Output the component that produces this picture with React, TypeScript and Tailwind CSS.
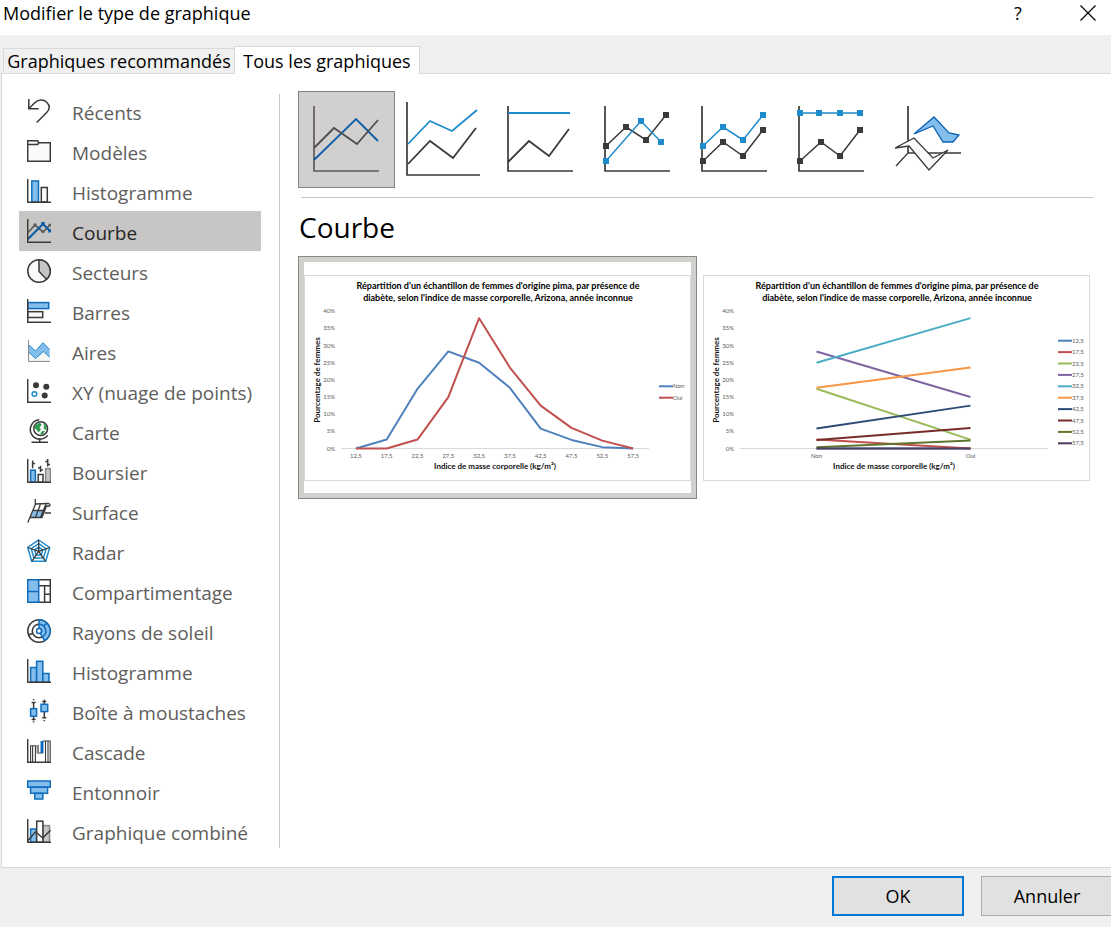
import { useState, type ReactNode } from "react";

const DARK = "#3b3a39";
const BLUE = "#0f6cbd";
const SKY = "#83beec";
const LINE = "#1e8bcd";
const MUTED = "#c8c6c4";

function Glyph({ children, axis = false }: { children: ReactNode; axis?: boolean }) {
  return (
    <svg viewBox="0 0 24 24" className="size-6 shrink-0" fill="none" stroke={DARK} strokeWidth={1.5} aria-hidden="true">
      {children}
      {axis && <path d="M.7 0V23.3H24" />}
    </svg>
  );
}

const pentagon = (s: number) =>
  [[0, -11.3], [11, -3.8], [7, 10], [-7, 10], [-11, -3.8]].map(([x, y]) => `${11.7 + x * s},${12.3 + y * s}`).join(" ");

const categories: { label: string; icon: ReactNode }[] = [
  {
    label: "Récents",
    icon: (
      <Glyph>
        <path d="M1.8 0V9.7H11.7M2 9.5L7.5 4C11 .2 16.500 0 19.700 3.200C23 6.500 22.800 10.500 19.500 13.800L9.700 23.500" />
      </Glyph>
    ),
  },
  {
    label: "Modèles",
    icon: (
      <Glyph>
        <path d="M.7 22.300V1.800H10.700L11.800 3.700H23.300V22.300Z" fill="#fafafa" />
        <path d="M.7 5.500H10.700L11.800 3.700" />
      </Glyph>
    ),
  },
  {
    label: "Histogramme",
    icon: (
      <Glyph axis>
        <rect x="4.800" y="2" width="6.700" height="21" fill={SKY} stroke={BLUE} />
        <rect x="14.300" y="8.500" width="6" height="14.500" fill="#fafafa" />
      </Glyph>
    ),
  },
  {
    label: "Courbe",
    icon: (
      <Glyph axis>
        <g stroke="#5d5b59" fill="#5d5b59">
          <path d="M1 13.500L8 6L16 13L23 6" fill="none" strokeWidth="1.700" />
          <path d="M6.500 4.500h3v3h-3zM14.700 11.500h2.600v2.600h-2.600zM21.500 4.700H24v2.600h-2.500z" stroke="none" />
        </g>
        <path d="M1 20L16 5L23 12" stroke="#0a5ea8" strokeWidth="2.100" />
        <path d="M14.300 3.100h3.400v3.400h-3.400zM21.300 10.300H24v3.200h-2.700z" fill="#0a5ea8" stroke="none" />
      </Glyph>
    ),
  },
  {
    label: "Secteurs",
    icon: (
      <Glyph>
        <circle cx="12" cy="12" r="11.200" fill="#fafafa" />
        <path d="M12 .8A11.200 11.200 0 0 1 19.500 20.200L12 12.500Z" fill={MUTED} />
      </Glyph>
    ),
  },
  {
    label: "Barres",
    icon: (
      <Glyph axis>
        <rect x=".7" y="3.600" width="21" height="6" fill={SKY} stroke={BLUE} />
        <rect x=".7" y="12.700" width="15" height="5.800" fill="#fafafa" />
      </Glyph>
    ),
  },
  {
    label: "Aires",
    icon: (
      <Glyph>
        <path d="M1.500 13L8.500 19.500L16.500 12.500L22.700 18V22.300H1.500Z" fill="#f7f7f7" stroke="none" />
        <path d="M1.500 5.500L8.500 12L16 3.700L22.700 10.500V18L16.500 12.500L8.500 19.500L1.500 13Z" fill={SKY} stroke="none" />
        <path d="M1.500 5.500L8.500 12L16 3.700L22.700 10.500M22.700 18L16.500 12.500L8.500 19.500L1.500 13" stroke={LINE} strokeWidth="1" />
        <path d="M1.500 1V22.400H23" stroke="#8a8886" strokeWidth="1" />
      </Glyph>
    ),
  },
  {
    label: "XY (nuage de points)",
    icon: (
      <Glyph axis>
        <g fill={DARK} stroke="none">
          <circle cx="9" cy="6.200" r="3" />
          <circle cx="19.300" cy="7.700" r="3" />
          <circle cx="17.700" cy="16.500" r="3" />
        </g>
        <circle cx="7.400" cy="15" r="2.300" stroke={LINE} />
      </Glyph>
    ),
  },
  {
    label: "Carte",
    icon: (
      <Glyph>
        <circle cx="13.700" cy="9.700" r="6.900" fill="#fff" />
        <path d="M8.500 6L13 3.500L14.800 6L12.500 8.500L14 10.500L11.500 13.500L9 10L7.500 9.500ZM16 4L19.500 7V11.500L16.500 9.500L17 7ZM15 12L18 12L16 15.300L13 15.500Z" fill="#2e9a4d" stroke="none" />
        <path d="M12.300 .8A9.700 9.700 0 1 0 20.700 16.400M12.700 19V23.300M4.500 23.300H21" />
      </Glyph>
    ),
  },
  {
    label: "Boursier",
    icon: (
      <Glyph axis>
        <rect x="3.600" y="11.200" width="4.800" height="12" fill={SKY} stroke={BLUE} />
        <rect x="11.200" y="15.500" width="4.800" height="7.700" fill="#fff" />
        <rect x="18.600" y="9.600" width="4.800" height="13.600" fill={MUTED} stroke="#8a8886" />
        <path d="M5.600 1.500V9.300M5.600 4.600H8M13.500 6.700V13M13.500 9H11M13.500 11H16M20.700 0V7.500M18.300 2.500H20.700M20.700 5.500H23" />
      </Glyph>
    ),
  },
  {
    label: "Surface",
    icon: (
      <Glyph>
        <path d="M4.800 12.500L17.500 11.500L14.800 18H3.300Z" fill={SKY} stroke="none" />
        <path d="M8.300 0V5.500L.8 23.500M8.300 5L21.500 4.500C23 5 23.500 6 22.500 7H19.500L15 18.500H3M6 11.500H18M13.500 5L8.500 18.500M19 5L13.500 18.500M18 14H24" strokeWidth="1.300" />
      </Glyph>
    ),
  },
  {
    label: "Radar",
    icon: (
      <Glyph>
        <g stroke={LINE}>
          <polygon points={pentagon(1)} />
          <polygon points={pentagon(0.68)} />
          <polygon points={pentagon(0.36)} />
        </g>
        <path d="M11.700 12.300V1M11.700 12.300L22.700 8.500M11.700 12.300L18.700 22.300M11.700 12.300L4.700 22.300M11.700 12.300L.7 8.500" strokeWidth="1.300" />
      </Glyph>
    ),
  },
  {
    label: "Compartimentage",
    icon: (
      <Glyph>
        <path d="M11.700 .7H23.300V23.300H11.700M11.700 6.800H23.300M17.600 6.800V23.300M17.600 15.300H23.300" />
        <path d="M.7 .7H11.700V23.300H.7ZM.7 12.600H11.700" fill={SKY} stroke={BLUE} />
      </Glyph>
    ),
  },
  {
    label: "Rayons de soleil",
    icon: (
      <Glyph>
        <circle cx="12" cy="12" r="11.200" fill="#fff" />
        <circle cx="12" cy="12" r="6.700" />
        <path d="M1.500 16L5.700 14.300" />
        <path d="M12 .8A11.200 11.200 0 0 1 17.600 21.700L13.300 14.300A2.600 2.600 0 0 0 12 9.400Z" fill={SKY} stroke={BLUE} />
        <path d="M12 5.300A6.700 6.700 0 0 1 15.400 17.800M16.700 7.300L20 4" stroke={BLUE} />
        <circle cx="12" cy="12" r="2.500" fill="#fff" stroke={BLUE} />
      </Glyph>
    ),
  },
  {
    label: "Histogramme",
    icon: (
      <Glyph axis>
        <g fill={SKY} stroke={BLUE}>
          <rect x="3.600" y="8.500" width="6" height="14.700" />
          <rect x="9.600" y="2.300" width="6.200" height="21" />
          <rect x="15.800" y="14.500" width="6.200" height="8.800" />
        </g>
      </Glyph>
    ),
  },
  {
    label: "Boîte à moustaches",
    icon: (
      <Glyph>
        <path d="M6.600 3.500V20.500M4.600 3.500H8.600M4.600 20.500H8.600M17.300 2.500V18.700M15.300 2.500H19.300M15.300 18.700H19.300M6.600 0V1.300M6.600 22.300V23.600M17.300 .8V2M17.300 21V22.300" />
        <g fill={SKY} stroke={BLUE}>
          <rect x="3.600" y="9.700" width="6" height="7.500" />
          <rect x="14" y="5.300" width="6.700" height="7.300" />
        </g>
      </Glyph>
    ),
  },
  {
    label: "Cascade",
    icon: (
      <Glyph axis>
        <path d="M3.600 23V6.800H9.500M5.600 6.800V23M8.400 6.800V23M18.500 23V2M21 2V23M16 2H23.200V23M10 14H16" strokeWidth="1.100" />
        <path d="M9.500 6H12V14H9.500Z" fill="#8a8886" stroke="none" />
        <path d="M13.500 2H16.500V14H13.500Z" fill={BLUE} stroke="none" />
      </Glyph>
    ),
  },
  {
    label: "Entonnoir",
    icon: (
      <Glyph>
        <g fill={SKY} stroke={BLUE}>
          <rect x=".7" y="2" width="22.600" height="6.200" />
          <rect x="3.600" y="8.200" width="17" height="6.100" />
          <rect x="7.800" y="14.300" width="8" height="5.700" />
        </g>
      </Glyph>
    ),
  },
  {
    label: "Graphique combiné",
    icon: (
      <Glyph axis>
        <rect x="3.600" y="10" width="6" height="13.300" fill={SKY} stroke={BLUE} />
        <rect x="16" y="6.600" width="6.500" height="16.700" fill={MUTED} stroke="#8a8886" />
        <rect x="9.700" y="2.200" width="6.200" height="21" fill="#fff" />
        <path d="M1 21.500L8.500 12.700L15.800 19L23.500 11.300" />
      </Glyph>
    ),
  },
];

const AXIS = "M16 15V80H81";

function Trace({ points, color, marks = false }: { points: number[][]; color: string; marks?: boolean }) {
  return (
    <g>
      <polyline points={points.map((p) => p.join(",")).join(" ")} fill="none" stroke={color} strokeWidth={marks ? 1.5 : 1.8} />
      {marks && points.map(([x, y]) => <rect key={x} x={x - 3} y={y - 3} width="6" height="6" fill={color} />)}
    </g>
  );
}

const subtypes: { name: string; axis: string; art: ReactNode }[] = [
  {
    name: "Courbe",
    axis: AXIS,
    art: (
      <>
        <Trace points={[[16, 69], [58, 28], [80, 50]]} color="#0a5ea8" />
        <Trace points={[[16, 57], [36, 37], [59, 53], [80, 29]]} color="#504e4c" />
      </>
    ),
  },
  {
    name: "Courbe empilée",
    axis: "M12 11V84H85",
    art: (
      <>
        <Trace points={[[13, 53], [35, 30], [57, 40], [82, 19]]} color={LINE} />
        <Trace points={[[13, 73], [35, 50], [58, 67], [81, 37]]} color={DARK} />
      </>
    ),
  },
  {
    name: "Courbe empilée 100 %",
    axis: AXIS,
    art: (
      <>
        <Trace points={[[16, 22], [78, 22]]} color={LINE} />
        <Trace points={[[16, 71], [37, 50], [57, 65], [77, 38]]} color={DARK} />
      </>
    ),
  },
  {
    name: "Courbe avec marques",
    axis: AXIS,
    art: (
      <>
        <Trace marks points={[[17, 55], [37, 36], [57, 49], [77, 24]]} color={DARK} />
        <Trace marks points={[[17, 70], [52, 30], [72, 51]]} color={LINE} />
      </>
    ),
  },
  {
    name: "Courbe empilée avec marques",
    axis: AXIS,
    art: (
      <>
        <Trace marks points={[[17, 70], [37, 51], [57, 65], [77, 39]]} color={DARK} />
        <Trace marks points={[[17, 55], [37, 36], [57, 49], [77, 24]]} color={LINE} />
      </>
    ),
  },
  {
    name: "Courbe empilée 100 % avec marques",
    axis: AXIS,
    art: (
      <>
        <Trace marks points={[[17, 70], [38, 51], [57, 65], [77, 39]]} color={DARK} />
        <Trace marks points={[[17, 22], [36, 22], [57, 22], [77, 22]]} color={LINE} />
      </>
    ),
  },
  {
    name: "Courbe 3D",
    axis: "M28 15V62H81",
    art: (
      <g strokeWidth="1.300">
        <path d="M28 62L16 75" stroke={DARK} />
        <path d="M15 57L34 47L53 67L68 59L49 79L29 55Z" fill="#fafafa" stroke={DARK} />
        <path d="M34 43L54 26L69 42L79 44L73 51H63L53 35Z" fill={SKY} stroke="#0a64b4" />
      </g>
    ),
  },
];

type Series = { name: string; color: string; values: number[] };

const bins = ["12,5", "17,5", "22,5", "27,5", "32,5", "37,5", "42,5", "47,5", "52,5", "57,5"];
const non = [0, 2.6, 17.4, 28.3, 25, 17.7, 5.8, 2.5, 0.4, 0];
const oui = [0, 0, 2.6, 15, 38, 23.6, 12.5, 6, 2.3, 0];
const binColors = ["#4a7ebb", "#c0504d", "#9bbb59", "#8064a2", "#4bacc6", "#f79646", "#2c4d75", "#772c2a", "#5f7530", "#4d3b62"];

const byAnswer: Series[] = [
  { name: "Non", color: "#4f81bd", values: non },
  { name: "Oui", color: "#c0504d", values: oui },
];
const byBin: Series[] = bins.map((name, i) => ({ name, color: binColors[i], values: [non[i], oui[i]] }));

function LineChart({ labels, series }: { labels: string[]; series: Series[] }) {
  const step = 308 / labels.length;
  const x = (i: number) => 36.5 + step * (i + 0.5);
  const y = (v: number) => 173.5 - v * 3.43;
  const legendTop = 117 - ((series.length - 1) * 11.4) / 2;
  return (
    <svg viewBox="0 0 387 206" className="block w-full bg-white font-['Lato','Liberation_Sans',sans-serif]" role="img" aria-label="Répartition des femmes par indice de masse corporelle">
      <rect x=".5" y=".5" width="386" height="205" fill="none" stroke="#d9d9d9" />
      <g className="text-[9px] font-bold" textAnchor="middle" fill="#000">
        <text x="194" y="14">Répartition d'un échantillon de femmes d'origine pima, par présence de</text>
        <text x="194" y="26">diabète, selon l'indice de masse corporelle, Arizona, année inconnue</text>
      </g>
      <g className="text-[8px] font-bold" textAnchor="middle" fill="#111">
        <text x="191" y="194">Indice de masse corporelle (kg/m²)</text>
        <text transform="translate(16 105) rotate(-90)">Pourcentage de femmes</text>
      </g>
      <path d="M37 173.500H345" stroke="#d9d9d9" />
      <g className="text-[6px]" fill="#595959">
        {[0, 5, 10, 15, 20, 25, 30, 35, 40].map((v) => (
          <text key={v} x="31" y={y(v) + 2} textAnchor="end">{v}%</text>
        ))}
        {labels.map((l, i) => (
          <text key={l} x={x(i)} y="183" textAnchor="middle">{l}</text>
        ))}
        {series.map((s, i) => (
          <text key={s.name} x="369" y={legendTop + i * 11.4 + 2}>{s.name}</text>
        ))}
      </g>
      {series.map((s, i) => (
        <g key={s.name} fill="none" stroke={s.color} strokeWidth="2" strokeLinejoin="round">
          <polyline points={s.values.map((v, k) => `${x(k)},${y(v)}`).join(" ")} />
          <path d={`M355 ${legendTop + i * 11.4}H369`} />
        </g>
      ))}
    </svg>
  );
}

export default function App() {
  const [category, setCategory] = useState(3);
  const [subtype, setSubtype] = useState(0);
  const [preview, setPreview] = useState(0);

  return (
    <div role="dialog" aria-label="Modifier le type de graphique" className="flex min-h-screen flex-col overflow-hidden bg-[#f0f0f0] font-['Open_Sans','Noto_Sans',sans-serif] text-[18px] leading-6 text-black">
      <header className="flex h-[35px] items-start justify-between bg-white pl-[3px]">
        <h1 className="pt-px">Modifier le type de graphique</h1>
        <div className="flex pr-[13px]">
          <button type="button" aria-label="Aide" className="w-10">?</button>
          <button type="button" aria-label="Fermer" className="ml-[40px] flex h-[26px] w-5 items-center justify-center">
            <svg viewBox="0 0 16 16" className="size-4" stroke="#000" strokeWidth="1.200" aria-hidden="true">
              <path d="M.5 .5L15.500 15.500M15.500 .5L.5 15.500" />
            </svg>
          </button>
        </div>
      </header>

      <div role="tablist" className="flex h-[39px] items-end pl-[3px] shadow-[inset_0_-1px_0_#d9d9d9]">
        <button type="button" role="tab" aria-selected="false" className="h-[26px] w-[231px] border border-r-0 border-[#d9d9d9] whitespace-nowrap">
          Graphiques recommandés
        </button>
        <button type="button" role="tab" aria-selected="true" className="h-[28px] w-[186px] border border-b-0 border-[#d9d9d9] bg-white whitespace-nowrap">
          Tous les graphiques
        </button>
      </div>

      <main className="ml-px flex flex-1 border-b border-l border-[#d9d9d9] bg-white">
        <nav aria-label="Types de graphique" className="mt-[17px] mb-4 ml-[17px] w-[242px] shrink-0">
          <ul>
            {categories.map((c, i) => (
              <li key={i}>
                <button
                  type="button"
                  aria-pressed={i === category}
                  onClick={() => setCategory(i)}
                  className={`flex h-10 w-full items-center gap-[21px] pl-2 text-left text-[19px] whitespace-nowrap ${i === category ? "bg-[#c8c6c4] text-[#262626]" : "text-[#605e5c]"}`}
                >
                  {c.icon}
                  <span className="pt-1">{c.label}</span>
                </button>
              </li>
            ))}
          </ul>
        </nav>

        <section className="mt-5 mb-[19px] ml-[18px] min-w-0 flex-1 border-l border-[#c8c6c4] pr-[15px] pl-[18px]">
          <div className="-mt-[3px] flex">
            {subtypes.map((s, i) => (
              <button
                key={s.name}
                type="button"
                aria-label={s.name}
                aria-pressed={i === subtype}
                onClick={() => setSubtype(i)}
                className={`size-[97px] border ${i === subtype ? "border-[#838383] bg-[#d2d0ce]" : "border-transparent"}`}
              >
                <svg viewBox="1 1 95 95" className="block size-full" fill="none" aria-hidden="true">
                  <path d={s.axis} stroke={i === subtype ? "#5d5b59" : DARK} strokeWidth="1.700" />
                  {s.art}
                </svg>
              </button>
            ))}
          </div>
          <hr className="mx-[3px] mt-[9px] border-[#c8c6c4]" />
          <h2 className="mt-2 pl-px text-[28px] leading-[42px]">Courbe</h2>
          <div className="mt-2 grid grid-cols-2">
            {[
              { labels: bins, series: byAnswer },
              { labels: ["Non", "Oui"], series: byBin },
            ].map((chart, i) => (
              <button
                key={i}
                type="button"
                aria-pressed={i === preview}
                onClick={() => setPreview(i)}
                className={`border p-[5px] ${i === preview ? "border-[#868a80] bg-[#d2d0ce]" : "border-transparent"}`}
              >
                <span className="block bg-white pt-[13px] pb-3">
                  <LineChart labels={chart.labels} series={chart.series} />
                </span>
              </button>
            ))}
          </div>
        </section>
      </main>

      <footer className="-mr-[2px] flex h-[59px] items-start justify-end gap-[17px] pt-2">
        <button type="button" className="h-10 w-[132px] border-2 border-[#0078d7] bg-[#e1e1e1]">OK</button>
        <button type="button" className="h-10 w-[132px] border border-[#adadad] bg-[#e1e1e1]">Annuler</button>
      </footer>
    </div>
  );
}
